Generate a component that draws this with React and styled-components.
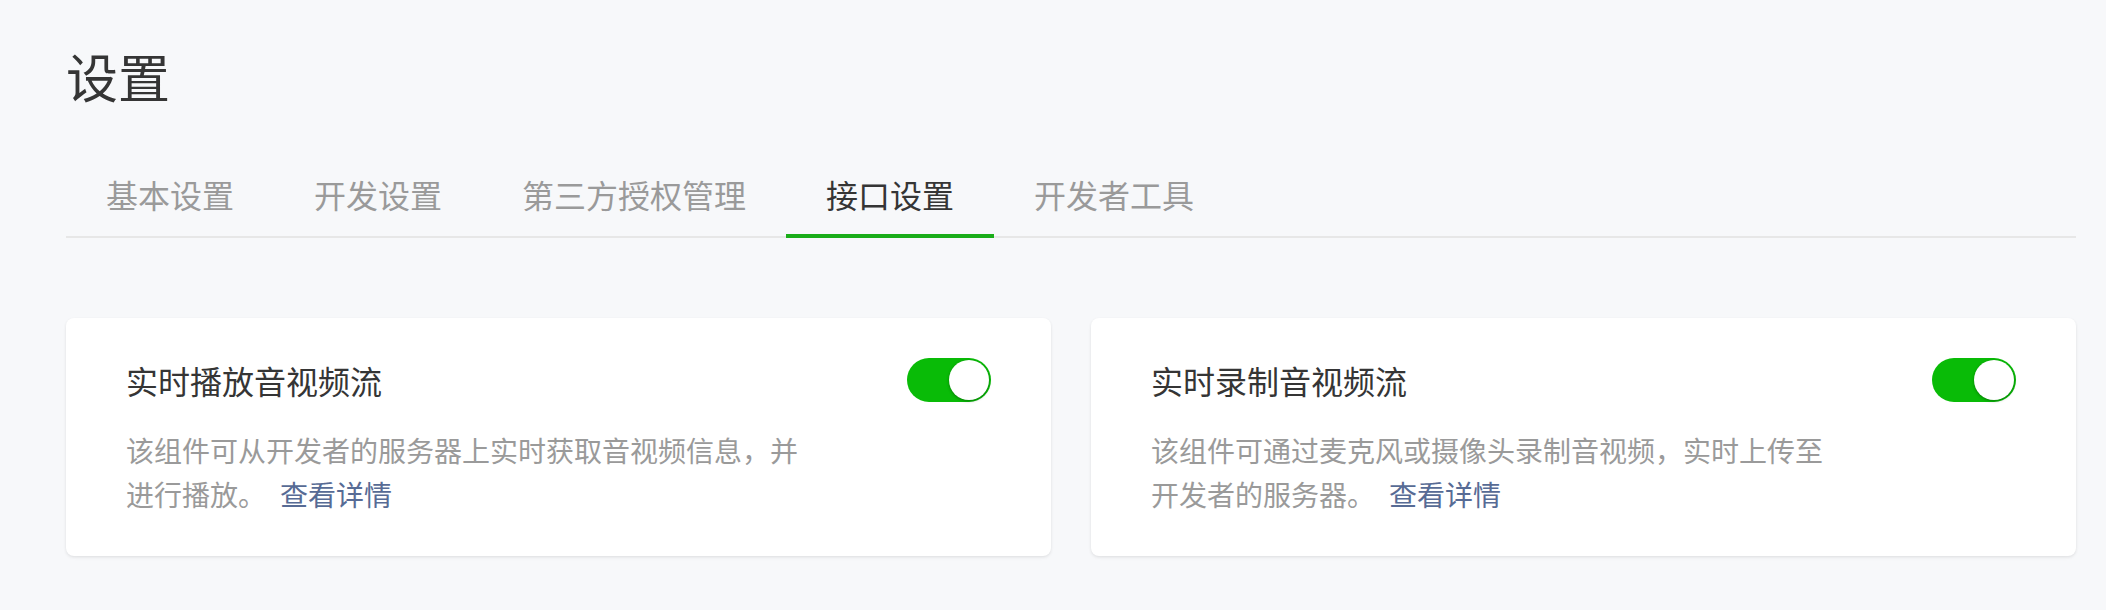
import React, { useState } from 'react'
import styled, { createGlobalStyle } from 'styled-components'

const GlobalStyle = createGlobalStyle`
  html, body {
    margin: 0;
    padding: 0;
    background: #f7f8fa;
  }
  body {
    font-family: "Noto Sans CJK SC", "Noto Sans", sans-serif;
    color: #353535;
  }
`

const Page = styled.div`
  padding: 40px 30px 40px 66px;
`

const Title = styled.h1`
  margin: 0;
  font-size: 52px;
  line-height: 72px;
  font-weight: 400;
  color: #353535;
`

const TabBar = styled.div`
  display: flex;
  margin-top: 60px;
  border-bottom: 2px solid #e7e7e7;
`

const Tab = styled.div`
  padding: 0 40px 18px;
  margin-bottom: -2px;
  font-size: 32px;
  line-height: 44px;
  color: ${props => (props.active ? '#353535' : '#9a9a9a')};
  border-bottom: 4px solid ${props => (props.active ? '#1aad19' : 'transparent')};
  cursor: pointer;
`

const CardGrid = styled.div`
  display: grid;
  grid-template-columns: 1fr 1fr;
  gap: 40px;
  margin-top: 80px;
`

const Card = styled.div`
  background: #fff;
  border-radius: 8px;
  padding: 40px 60px;
  box-shadow: 0 1px 3px rgba(0, 0, 0, 0.08), 0 2px 4px rgba(0, 0, 0, 0.03);
`

const CardHead = styled.div`
  display: flex;
  align-items: center;
  justify-content: space-between;
  height: 44px;
`

const CardTitle = styled.div`
  font-size: 32px;
  line-height: 44px;
  color: #353535;
`

const Desc = styled.p`
  margin: 26px 0 0;
  max-width: 680px;
  font-size: 28px;
  line-height: 44px;
  color: #9a9a9a;
`

const Link = styled.a`
  margin-left: 14px;
  color: #576b95;
  text-decoration: none;
  cursor: pointer;
`

const Switch = styled.button`
  position: relative;
  width: 84px;
  height: 44px;
  padding: 0;
  border: none;
  border-radius: 22px;
  background: ${props => (props.checked ? '#09bb07' : '#dfdfdf')};
  cursor: pointer;
  flex-shrink: 0;
`

const Knob = styled.span`
  position: absolute;
  top: 2px;
  left: ${props => (props.checked ? '42px' : '2px')};
  width: 40px;
  height: 40px;
  border-radius: 50%;
  background: #fff;
  box-shadow: 0 1px 3px rgba(0, 0, 0, 0.35);
  transition: left 0.2s;
`

const tabs = ['基本设置', '开发设置', '第三方授权管理', '接口设置', '开发者工具']

const apis = [
  {
    title: '实时播放音视频流',
    desc: '该组件可从开发者的服务器上实时获取音视频信息，并进行播放。',
  },
  {
    title: '实时录制音视频流',
    desc: '该组件可通过麦克风或摄像头录制音视频，实时上传至开发者的服务器。',
  },
]

function Toggle({ initial }) {
  const [on, setOn] = useState(initial)
  return (
    <Switch checked={on} onClick={() => setOn(!on)}>
      <Knob checked={on} />
    </Switch>
  )
}

export default function App() {
  const [active, setActive] = useState(3)
  return (
    <>
      <GlobalStyle />
      <Page>
        <Title>设置</Title>
        <TabBar>
          {tabs.map((t, i) => (
            <Tab key={t} active={i === active} onClick={() => setActive(i)}>
              {t}
            </Tab>
          ))}
        </TabBar>
        <CardGrid>
          {apis.map(api => (
            <Card key={api.title}>
              <CardHead>
                <CardTitle>{api.title}</CardTitle>
                <Toggle initial={true} />
              </CardHead>
              <Desc>
                {api.desc}
                <Link>查看详情</Link>
              </Desc>
            </Card>
          ))}
        </CardGrid>
      </Page>
    </>
  )
}
